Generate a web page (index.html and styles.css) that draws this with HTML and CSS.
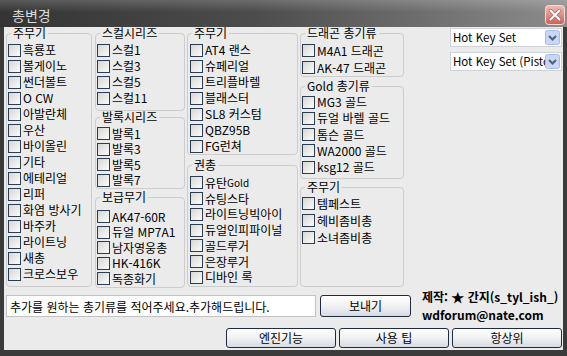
FILE: index.html
```html
<!DOCTYPE html>
<html lang="ko">
<head>
    <meta charset="UTF-8">
    <meta name="viewport" content="width=device-width, initial-scale=1.0">
    <title>총변경</title>
    <link rel="stylesheet" href="styles.css">
</head>
<body>
    <div class="window">
        <div class="titlebar">
            <span class="title">총변경</span>
            <button class="close" title="닫기">
                <svg width="20" height="20" viewBox="0 0 20 20">
                    <defs>
                        <linearGradient id="closeBg" x1="0" y1="0" x2="0" y2="1">
                            <stop offset="0" stop-color="#f2bcb6"/>
                            <stop offset="1" stop-color="#cf5f57"/>
                        </linearGradient>
                    </defs>
                    <rect x="0.5" y="0.5" width="19" height="19" rx="3" fill="url(#closeBg)" stroke="#f4dcd8"/>
                    <path d="M5.5 5.5 L14.5 14.5 M14.5 5.5 L5.5 14.5" stroke="#9a6b68" stroke-width="3.4" stroke-linecap="round"/>
                    <path d="M5.5 5.5 L14.5 14.5 M14.5 5.5 L5.5 14.5" stroke="#fff" stroke-width="2" stroke-linecap="round"/>
                </svg>
            </button>
        </div>

        <div class="content">
            <div class="groups">
                <div class="col col1">
                    <fieldset class="grp">
                        <legend>주무기</legend>
                        <label><input type="checkbox">흑룡포</label>
                        <label><input type="checkbox">볼게이노</label>
                        <label><input type="checkbox">썬더볼트</label>
                        <label><input type="checkbox">O CW</label>
                        <label><input type="checkbox">아발란체</label>
                        <label><input type="checkbox">우산</label>
                        <label><input type="checkbox">바이올린</label>
                        <label><input type="checkbox">기타</label>
                        <label><input type="checkbox">에테리얼</label>
                        <label><input type="checkbox">리퍼</label>
                        <label><input type="checkbox">화염 방사기</label>
                        <label><input type="checkbox">바주카</label>
                        <label><input type="checkbox">라이트닝</label>
                        <label><input type="checkbox">새총</label>
                        <label><input type="checkbox">크로스보우</label>
                    </fieldset>
                </div>

                <div class="col col2">
                    <fieldset class="grp skull">
                        <legend>스컬시리즈</legend>
                        <label><input type="checkbox">스컬1</label>
                        <label><input type="checkbox">스컬3</label>
                        <label><input type="checkbox">스컬5</label>
                        <label><input type="checkbox">스컬11</label>
                    </fieldset>
                    <fieldset class="grp balrog">
                        <legend>발록시리즈</legend>
                        <label><input type="checkbox">발록1</label>
                        <label><input type="checkbox">발록3</label>
                        <label><input type="checkbox">발록5</label>
                        <label><input type="checkbox">발록7</label>
                    </fieldset>
                    <fieldset class="grp supply">
                        <legend>보급무기</legend>
                        <label><input type="checkbox">AK47-60R</label>
                        <label><input type="checkbox">듀얼 MP7A1</label>
                        <label><input type="checkbox">남자영웅총</label>
                        <label><input type="checkbox">HK-416K</label>
                        <label><input type="checkbox">독종화기</label>
                    </fieldset>
                </div>

                <div class="col col3">
                    <fieldset class="grp">
                        <legend>주무기</legend>
                        <label><input type="checkbox">AT4 랜스</label>
                        <label><input type="checkbox">슈페리얼</label>
                        <label><input type="checkbox">트리플바렐</label>
                        <label><input type="checkbox">블래스터</label>
                        <label><input type="checkbox">SL8 커스텀</label>
                        <label><input type="checkbox">QBZ95B</label>
                        <label><input type="checkbox">FG런쳐</label>
                    </fieldset>
                    <fieldset class="grp pistol">
                        <legend>권총</legend>
                        <label><input type="checkbox">유탄<small>Gold</small></label>
                        <label><input type="checkbox">슈팅스타</label>
                        <label><input type="checkbox">라이트닝빅아이</label>
                        <label><input type="checkbox">듀얼인피파이널</label>
                        <label><input type="checkbox">골드루거</label>
                        <label><input type="checkbox">은장루거</label>
                        <label><input type="checkbox">디바인 록</label>
                    </fieldset>
                </div>

                <div class="col col4">
                    <fieldset class="grp dragon">
                        <legend>드래곤 총기류</legend>
                        <label><input type="checkbox">M4A1 드래곤</label>
                        <label><input type="checkbox">AK-47 드래곤</label>
                    </fieldset>
                    <fieldset class="grp gold">
                        <legend>Gold 총기류</legend>
                        <label><input type="checkbox">MG3 골드</label>
                        <label><input type="checkbox">듀얼 바렐 골드</label>
                        <label><input type="checkbox">톰슨 골드</label>
                        <label><input type="checkbox">WA2000 골드</label>
                        <label><input type="checkbox">ksg12 골드</label>
                    </fieldset>
                    <fieldset class="grp zombie">
                        <legend>주무기</legend>
                        <label><input type="checkbox">템페스트</label>
                        <label><input type="checkbox">헤비좀비총</label>
                        <label><input type="checkbox">소녀좀비총</label>
                    </fieldset>
                </div>

                <div class="side">
                    <div class="combo">
                        <span>Hot Key Set</span>
                        <svg width="15" height="15" viewBox="0 0 15 15">
                            <rect x="0.5" y="0.5" width="14" height="14" rx="2" fill="#c9d7f5" stroke="#a7bbe6"/>
                            <path d="M4 6 L7.5 9.5 L11 6" fill="none" stroke="#4d6185" stroke-width="2"/>
                        </svg>
                    </div>
                    <div class="combo">
                        <span>Hot Key Set (Pistol)</span>
                        <svg width="15" height="15" viewBox="0 0 15 15">
                            <rect x="0.5" y="0.5" width="14" height="14" rx="2" fill="#c9d7f5" stroke="#a7bbe6"/>
                            <path d="M4 6 L7.5 9.5 L11 6" fill="none" stroke="#4d6185" stroke-width="2"/>
                        </svg>
                    </div>
                </div>
            </div>

            <div class="send">
                <input class="memo" type="text" value="추가를 원하는 총기류를 적어주세요.추가해드립니다.">
                <button class="btn send-btn">보내기</button>
                <div class="credit">
                    <div>제작: <span class="star">★</span> 간지(s_tyl_ish_)</div>
                    <div>wdforum@nate.com</div>
                </div>
            </div>

            <div class="actions">
                <button class="btn">엔진기능</button>
                <button class="btn">사용 팁</button>
                <button class="btn">항상위</button>
            </div>
        </div>
    </div>
</body>
</html>
```

FILE: styles.css
```css
* {
    box-sizing: border-box;
}
body {
    margin: 0;
    font-family: "Noto Sans CJK KR", sans-serif;
    font-size: 12px;
    color: #000;
    background: #fff;
}
.window {
    width: 567px;
    height: 356px;
    display: flex;
    flex-direction: column;
}
.titlebar {
    height: 27px;
    flex: none;
    display: flex;
    align-items: center;
    justify-content: space-between;
    padding: 0 2px 0 12px;
    background: linear-gradient(to bottom, rgba(255, 255, 255, 0.18), rgba(255, 255, 255, 0) 45%),
                linear-gradient(to right, #343434, #4c4c4c 45%, #8c8c8c);
}
.title {
    color: #dcdcdc;
    font-size: 14px;
    line-height: 14px;
    margin-top: 2px;
}
.close {
    width: 20px;
    height: 20px;
    padding: 0;
    border: none;
    background: none;
    margin-top: 3px;
}
.close svg {
    display: block;
}
.content {
    flex: 1;
    display: flex;
    flex-direction: column;
    background: #ebebeb;
    border: solid #3b3b3b;
    border-width: 0 4px 6px 4px;
    padding: 0 1px 0 2px;
}

/* check groups */
.groups {
    display: flex;
    height: 260px;
}
.col {
    display: flex;
    flex-direction: column;
}
.col1 {
    width: 86px;
    margin-right: 3px;
}
.col2 {
    width: 90px;
    margin-right: 2px;
}
.col3 {
    width: 111px;
    margin-right: 2px;
}
.col4 {
    width: 104px;
}
.grp {
    --row: 16px;
    margin: 0;
    min-width: 0;
    border: 1px solid #cdcdcd;
    border-radius: 4px;
    padding: 3px 0 0 1px;
}
.grp:last-child {
    flex: 1;
}
.grp legend {
    font-size: 12px;
    line-height: 12px;
    padding: 0 2px;
    margin-left: 3px;
}
.grp label {
    display: flex;
    align-items: center;
    height: var(--row);
    white-space: nowrap;
    line-height: 14px;
}
.grp input {
    appearance: none;
    flex: none;
    width: 13px;
    height: 13px;
    margin: 0 2px 0 0;
    border: 1px solid #2a3d52;
    background: linear-gradient(135deg, #d6d6d2, #fcfcfc);
}
.grp small {
    font-size: 10px;
}
.col3 .grp input {
    margin-left: 1px;
}
.skull {
    padding-bottom: 4px;
}
.balrog {
    --row: 15.5px;
}
.supply {
    --row: 15.5px;
    margin-top: 2px;
    padding-top: 6px;
}
.pistol {
    --row: 15.75px;
    margin-top: 4px;
    padding-top: 4px;
}
.dragon {
    --row: 17px;
}
.gold {
    --row: 16.25px;
    margin-top: 3px;
    padding-top: 2px;
    padding-bottom: 3px;
}
.zombie {
    --row: 17px;
    margin-top: 2px;
    padding-top: 2px;
}

/* hot key combos */
.side {
    margin-left: auto;
    width: 112px;
    padding-top: 1px;
    display: flex;
    flex-direction: column;
    gap: 5px;
}
.combo {
    height: 19px;
    display: flex;
    align-items: center;
    justify-content: space-between;
    background: #fff;
    border: 1px solid #cfd3d9;
    padding: 0 1px 0 2px;
    font-size: 11.5px;
}
.combo span {
    overflow: hidden;
    white-space: nowrap;
    line-height: 17px;
}
.combo svg {
    flex: none;
    display: block;
}

/* bottom */
.send {
    display: flex;
    align-items: center;
    height: 22px;
    margin-top: 8px;
}
.memo {
    width: 310px;
    height: 22px;
    border: 1px solid #c3c3c3;
    background: #fff;
    padding: 0 3px;
    font: inherit;
    font-size: 12px;
}
.btn {
    height: 20px;
    width: 110px;
    padding: 0;
    font: inherit;
    font-size: 12px;
    line-height: 14px;
    color: #000;
    border: 1px solid #1f2b40;
    border-radius: 3px;
    background: linear-gradient(to bottom, #ffffff, #f3f3f3 45%, #d6dbe4);
}
.send-btn {
    width: 91px;
    height: 22px;
    margin-left: 4px;
}
.credit {
    margin-left: 11px;
    font-weight: bold;
    line-height: 18px;
    white-space: nowrap;
}
.star {
    font-size: 13px;
}
.actions {
    display: flex;
    justify-content: flex-end;
    gap: 3px;
    margin-top: 11px;
}
```
